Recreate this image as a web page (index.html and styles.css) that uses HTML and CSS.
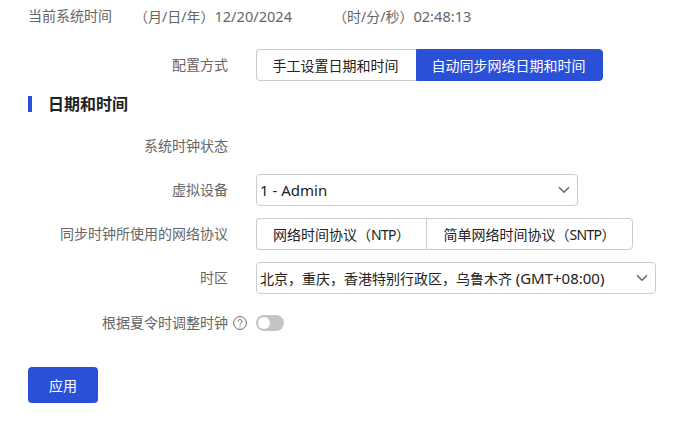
FILE: index.html
```html
<!DOCTYPE html>
<html lang="zh-CN">
<head>
<meta charset="utf-8">
<title>日期和时间</title>
<link rel="stylesheet" href="styles.css">
</head>
<body>
<main class="page">
  <div class="now">
    <span class="now-label">当前系统时间</span>
    <span class="now-date">（月/日/年）<span class="num">12/20/2024</span></span>
    <span class="now-time">（时/分/秒）<span class="num">02:48:13</span></span>
  </div>
  <div class="row row-mode">
    <div class="label">配置方式</div>
    <div class="seg">
      <button class="seg-btn seg-manual">手工设置日期和时间</button>
      <button class="seg-btn seg-auto">自动同步网络日期和时间</button>
    </div>
  </div>
  <h2 class="section">日期和时间</h2>
  <div class="row row-status">
    <div class="label">系统时钟状态</div>
  </div>
  <div class="row row-vdev">
    <div class="label">虚拟设备</div>
    <div class="select select-vdev">
      <span class="lat">1 - Admin</span>
      <svg class="chev" viewBox="0 0 12 8" width="12" height="8"><path d="M1 1.2 6 6.2 11 1.2" fill="none" stroke="#5f6772" stroke-width="1.5"/></svg>
    </div>
  </div>
  <div class="row row-proto">
    <div class="label">同步时钟所使用的网络协议</div>
    <div class="seg">
      <button class="seg-btn seg-ntp">网络时间协议（<span class="caps">NTP</span>）</button>
      <button class="seg-btn seg-sntp">简单网络时间协议（<span class="caps">SNTP</span>）</button>
    </div>
  </div>
  <div class="row row-tz">
    <div class="label">时区</div>
    <div class="select select-tz">
      <span>北京，重庆，香港特别行政区，乌鲁木齐 <span class="lat">(GMT+08:00)</span></span>
      <svg class="chev" viewBox="0 0 12 8" width="12" height="8"><path d="M1 1.2 6 6.2 11 1.2" fill="none" stroke="#5f6772" stroke-width="1.5"/></svg>
    </div>
  </div>
  <div class="row row-dst">
    <div class="label label-help">根据夏令时调整时钟<svg class="help" viewBox="0 0 14 14" width="14" height="14"><circle cx="7" cy="7" r="6.4" fill="none" stroke="#666" stroke-width="1"/><path d="M5 5.6a2 2 0 1 1 3.1 1.6c-.8.5-1.1.9-1.1 1.7" fill="none" stroke="#666" stroke-width="1"/><circle cx="7" cy="10.6" r=".7" fill="#666"/></svg></div>
    <div class="toggle"><span class="knob"></span></div>
  </div>
  <button class="apply">应用</button>
</main>
</body>
</html>
```
FILE: styles.css
```css
* { box-sizing: border-box; }
html, body { margin: 0; padding: 0; background: #fff; }
body {
  font-family: "Noto Sans", "Noto Sans CJK SC", sans-serif;
  font-size: 14px;
  color: #222;
  width: 686px;
  height: 427px;
  overflow: hidden;
}
.page { padding: 6px 0 0 28px; }
.lat { font-size: 15px; }
.num { font-size: 14.6px; }
.caps { letter-spacing: -0.7px; }
.now {
  display: flex;
  height: 20px;
  line-height: 20px;
  color: #666;
}
.now-label { width: 106px; flex: none; }
.now-date { width: 199px; flex: none; }
.row { display: flex; align-items: center; height: 32px; }
.label {
  width: 200px;
  flex: none;
  margin-right: 28px;
  text-align: right;
  color: #666;
  line-height: 20px;
}
.label-help { width: 219px; margin-right: 9px; display: flex; justify-content: flex-end; align-items: center; gap: 5px; }
.row-mode { margin-top: 23px; }
.row-status { margin-top: 24px; height: 20px; }
.row-vdev { margin-top: 18px; }
.row-proto { margin-top: 12px; }
.row-tz { margin-top: 12px; }
.row-dst { margin-top: 13px; height: 32px; }
.section {
  margin: 15px 0 0;
  height: 16px;
  line-height: 16px;
  padding-left: 16px;
  border-left: 4px solid #2b50d8;
  font-size: 16px;
  font-weight: 700;
  color: #222;
}
.seg { display: flex; height: 32px; }
.seg-btn {
  font: inherit;
  height: 32px;
  padding: 0;
  background: #fff;
  color: #222;
  border: 1px solid #ccc;
  cursor: pointer;
}
.seg-manual { width: 160px; border-radius: 4px 0 0 4px; border-right: 0; padding-right: 2px; }
.seg-auto { width: 187px; border-radius: 0 4px 4px 0; border-color: #2b50d8; background: #2b50d8; color: #fff; padding-right: 2px; }
.seg-ntp { width: 170px; border-radius: 4px 0 0 4px; border-right: 0; }
.seg-sntp { width: 207px; border-radius: 0 4px 4px 0; }
.select {
  display: flex;
  align-items: center;
  justify-content: space-between;
  height: 32px;
  border: 1px solid #ccc;
  border-radius: 4px;
  padding: 0 7px 0 3px;
  color: #222;
}
.select-vdev { width: 322px; }
.select-tz { width: 400px; }
.chev { flex: none; }
.help { flex: none; }
.toggle {
  width: 28px;
  height: 16px;
  border-radius: 8px;
  background: #c4c4c4;
  padding: 2px;
}
.knob { display: block; width: 12px; height: 12px; border-radius: 50%; background: #fff; }
.apply {
  display: block;
  margin-top: 28px;
  width: 70px;
  height: 36px;
  border: 0;
  border-radius: 4px;
  background: #2b50d8;
  color: #fff;
  font: inherit;
  cursor: pointer;
}
```
